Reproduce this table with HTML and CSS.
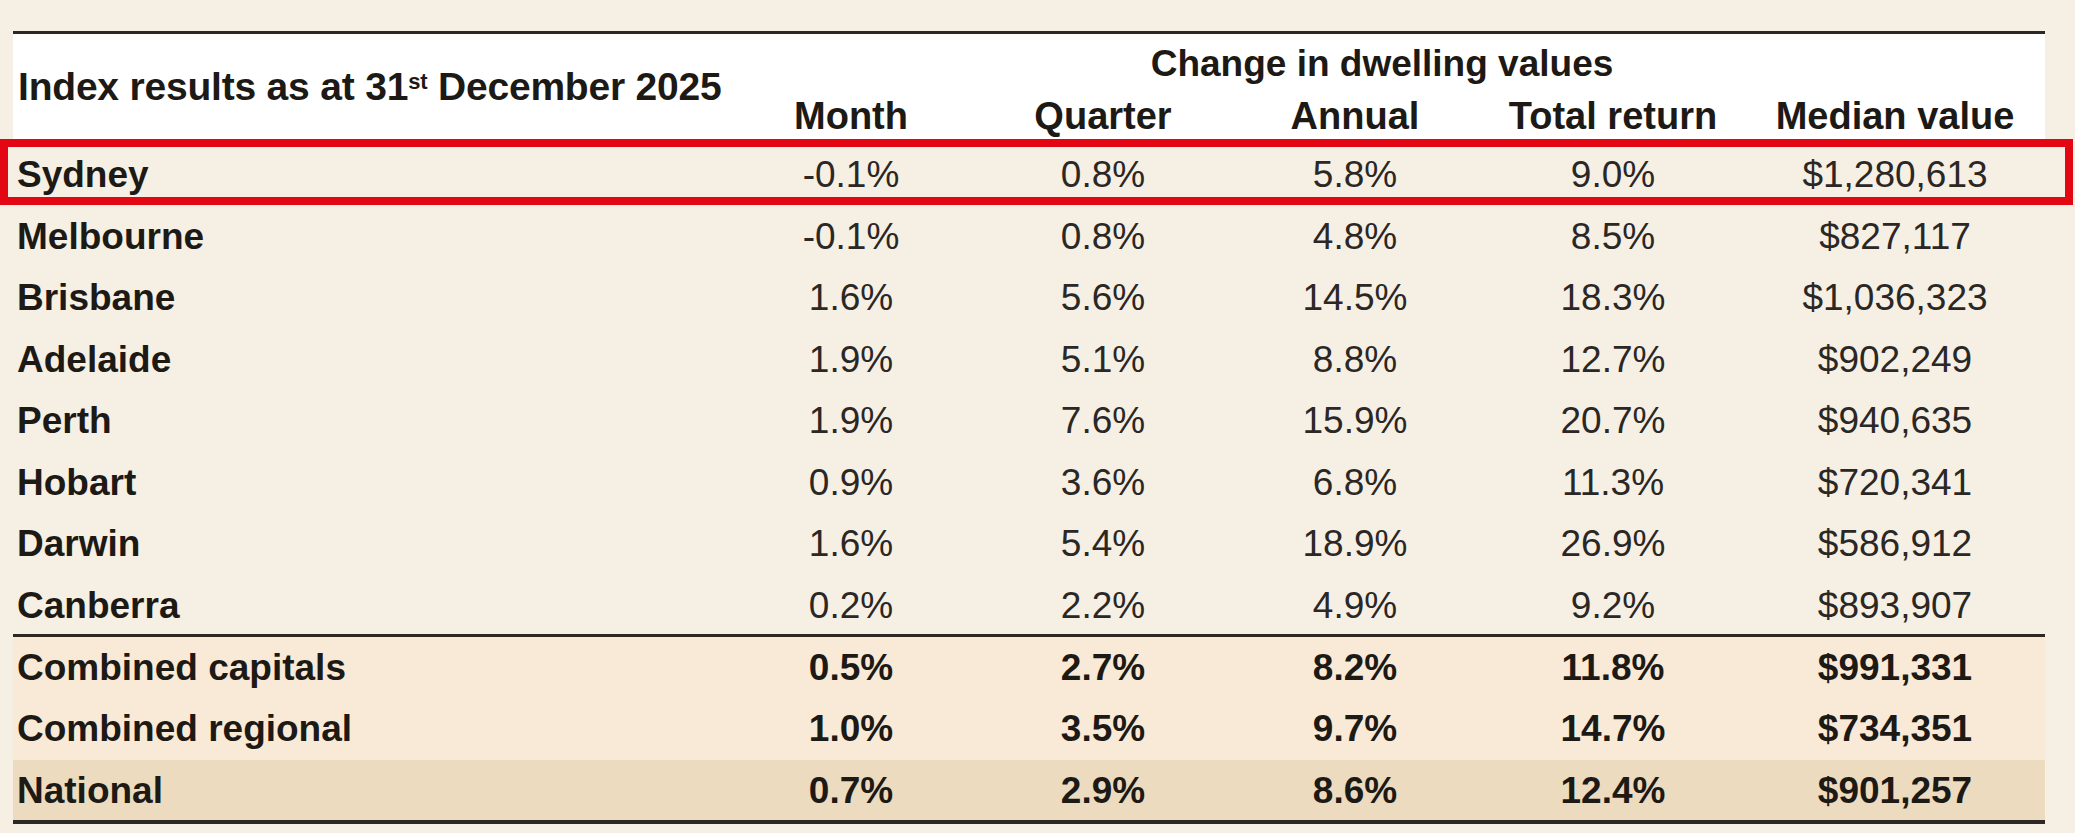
FILE: index.html
```html
<!DOCTYPE html>
<html lang="en">
<head>
<meta charset="utf-8">
<title>Index results</title>
<link rel="stylesheet" href="styles.css">
</head>
<body>
<div class="page">
  <div class="table">
    <div class="head">
      <div class="title">Index results as at 31<sup>st</sup> December 2025</div>
      <div class="group">Change in dwelling values</div>
      <div class="col">Month</div>
      <div class="col">Quarter</div>
      <div class="col">Annual</div>
      <div class="col">Total return</div>
      <div class="col">Median value</div>
    </div>
    <div class="row city highlight">
      <div class="name">Sydney</div><div class="num">-0.1%</div><div class="num">0.8%</div><div class="num">5.8%</div><div class="num">9.0%</div><div class="num">$1,280,613</div>
      <div class="redbox"></div>
    </div>
    <div class="row city"><div class="name">Melbourne</div><div class="num">-0.1%</div><div class="num">0.8%</div><div class="num">4.8%</div><div class="num">8.5%</div><div class="num">$827,117</div></div>
    <div class="row city"><div class="name">Brisbane</div><div class="num">1.6%</div><div class="num">5.6%</div><div class="num">14.5%</div><div class="num">18.3%</div><div class="num">$1,036,323</div></div>
    <div class="row city"><div class="name">Adelaide</div><div class="num">1.9%</div><div class="num">5.1%</div><div class="num">8.8%</div><div class="num">12.7%</div><div class="num">$902,249</div></div>
    <div class="row city"><div class="name">Perth</div><div class="num">1.9%</div><div class="num">7.6%</div><div class="num">15.9%</div><div class="num">20.7%</div><div class="num">$940,635</div></div>
    <div class="row city"><div class="name">Hobart</div><div class="num">0.9%</div><div class="num">3.6%</div><div class="num">6.8%</div><div class="num">11.3%</div><div class="num">$720,341</div></div>
    <div class="row city"><div class="name">Darwin</div><div class="num">1.6%</div><div class="num">5.4%</div><div class="num">18.9%</div><div class="num">26.9%</div><div class="num">$586,912</div></div>
    <div class="row city"><div class="name">Canberra</div><div class="num">0.2%</div><div class="num">2.2%</div><div class="num">4.9%</div><div class="num">9.2%</div><div class="num">$893,907</div></div>
    <div class="summary">
      <div class="row bold combined"><div class="name">Combined capitals</div><div class="num">0.5%</div><div class="num">2.7%</div><div class="num">8.2%</div><div class="num">11.8%</div><div class="num">$991,331</div></div>
      <div class="row bold combined"><div class="name">Combined regional</div><div class="num">1.0%</div><div class="num">3.5%</div><div class="num">9.7%</div><div class="num">14.7%</div><div class="num">$734,351</div></div>
      <div class="row bold national"><div class="name">National</div><div class="num">0.7%</div><div class="num">2.9%</div><div class="num">8.6%</div><div class="num">12.4%</div><div class="num">$901,257</div></div>
    </div>
  </div>
</div>
</body>
</html>
```

FILE: styles.css
```css
html, body {
  margin: 0;
  padding: 0;
  background: #f6efe4;
}
body {
  font-family: "Liberation Sans", Arial, sans-serif;
  color: #2a2724;
  width: 2075px;
  height: 833px;
  overflow: hidden;
}
.page {
  padding: 31px 30px 0 13px;
}
.table {
  width: 2032px;
  display: flex;
  flex-direction: column;
}
.head {
  display: grid;
  grid-template-columns: 712px 252px 252px 252px 264px 300px;
  grid-template-rows: 56px 52px;
  background: #ffffff;
  border-top: 3px solid #2e2824;
  font-weight: bold;
  color: #1d1915;
  font-size: 38px;
}
.title {
  grid-row: 1 / span 2;
  grid-column: 1;
  align-self: center;
  padding-left: 5px;
  font-size: 39px;
  letter-spacing: -0.2px;
  padding-bottom: 2px;
}
.title sup {
  font-size: 22px;
  vertical-align: 11px;
  line-height: 0;
}
.group {
  grid-row: 1;
  grid-column: 2 / span 5;
  text-align: center;
  align-self: center;
  font-size: 37px;
  padding-top: 4px;
  padding-right: 6px;
}
.col {
  grid-row: 2;
  text-align: center;
  align-self: center;
}
.row {
  position: relative;
  display: grid;
  grid-template-columns: 712px 252px 252px 252px 264px 300px;
  height: 61.5px;
  align-items: center;
  font-size: 37px;
}
.city > div {
  padding-top: 5px;
}
.name {
  font-weight: bold;
  color: #1d1915;
  padding-left: 4px;
}
.num {
  text-align: center;
}
.summary {
  border-top: 3px solid #2e2824;
  border-bottom: 4px solid #2e2824;
}
.bold .num {
  font-weight: bold;
  color: #1d1915;
}
.combined {
  background: #f8ead7;
}
.national {
  background: #ecdbbf;
  height: 58px;
  padding-top: 2px;
}
.redbox {
  position: absolute;
  left: -13px;
  right: -28px;
  top: -3px;
  bottom: -1px;
  padding: 0;
  border: 8px solid #e30613;
  pointer-events: none;
}
.city > .redbox {
  padding-top: 0;
}
```
